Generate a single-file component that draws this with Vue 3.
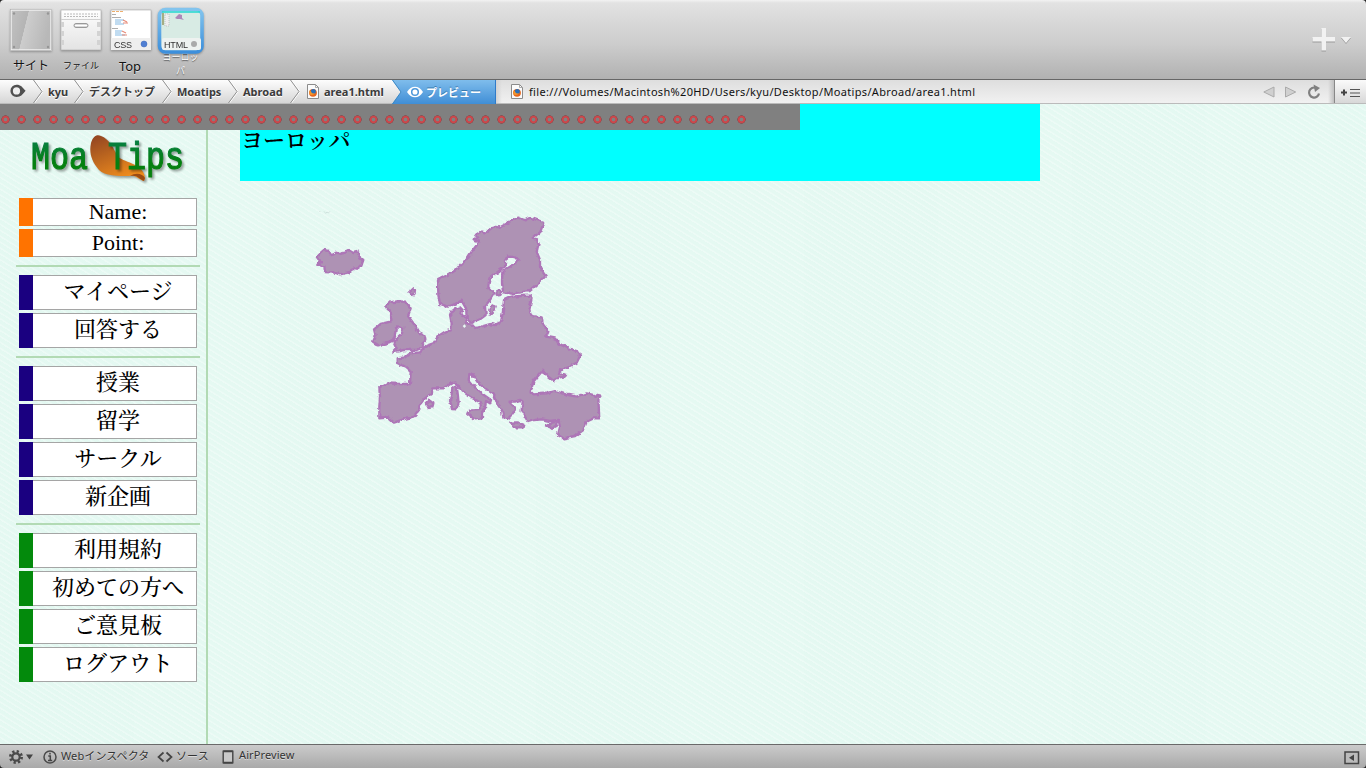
<script setup>
const crumbs = [
  { text: 'kyu', w: 41, cls: '' },
  { text: 'デスクトップ', w: 88, cls: 'jp' },
  { text: 'Moatips', w: 66, cls: '' },
  { text: 'Abroad', w: 62, cls: '' },
  { text: 'area1.html', w: 102, cls: 'doc' },
]
const groups = [
  { kind: 'orange', items: ['Name:', 'Point:'] },
  { kind: 'navy', items: ['マイページ', '回答する'] },
  { kind: 'navy', items: ['授業', '留学', 'サークル', '新企画'] },
  { kind: 'green', items: ['利用規約', '初めての方へ', 'ご意見板', 'ログアウト'] },
]
</script>

<template>
  <div class="window">
    <svg width="0" height="0" class="defs">
      <defs>
        <linearGradient id="metal" x1="0" y1="0" x2="1" y2="0.25">
          <stop offset="0" stop-color="#c2c2c2" /><stop offset=".42" stop-color="#b4b4b4" />
          <stop offset=".43" stop-color="#cdcdcd" /><stop offset="1" stop-color="#b8b8b8" />
        </linearGradient>
        <linearGradient id="drawer" x1="0" y1="0" x2="0" y2="1">
          <stop offset="0" stop-color="#fff" /><stop offset=".4" stop-color="#f3f3f3" /><stop offset="1" stop-color="#e3e3e3" />
        </linearGradient>
        <linearGradient id="sel" x1="0" y1="0" x2="0" y2="1">
          <stop offset="0" stop-color="#82c4ee" /><stop offset="1" stop-color="#3c8fdc" />
        </linearGradient>
        <linearGradient id="leaf" x1="0" y1="0" x2=".5" y2="1">
          <stop offset="0" stop-color="#8f4222" /><stop offset=".4" stop-color="#b4601f" /><stop offset="1" stop-color="#ef8c1e" />
        </linearGradient>
        <linearGradient id="word" x1="0" y1="0" x2="0" y2="1">
          <stop offset="0" stop-color="#087f4c" /><stop offset=".6" stop-color="#04800f" /><stop offset="1" stop-color="#0a8010" />
        </linearGradient>
        <linearGradient id="blue" x1="0" y1="0" x2="0" y2="1">
          <stop offset="0" stop-color="#7fbdec" /><stop offset="1" stop-color="#408ed6" />
        </linearGradient>
        <filter id="rough" x="-2%" y="-2%" width="104%" height="104%">
          <feTurbulence type="fractalNoise" baseFrequency="0.07" numOctaves="2" seed="4" />
          <feDisplacementMap in="SourceGraphic" scale="13" xChannelSelector="R" yChannelSelector="G" />
        </filter>
        <symbol id="fox" viewBox="0 0 12 15">
          <path d="M.5 .5h8l3 3v11H.5z" fill="#fbfbfb" stroke="#8b8b8b" />
          <path d="M8.500 .5v3h3" fill="none" stroke="#999" stroke-width=".8" />
          <circle cx="6" cy="8.800" r="3.900" fill="#e8661b" />
          <circle cx="6.300" cy="7.600" r="2.500" fill="#2b6fb8" />
          <path d="M2.300 6.500c1 .3 2 .8 2.200 2 .8 1 2 1.200 3.300.5-.5 2-4 3-5.300.5z" fill="#f3962b" />
        </symbol>
      </defs>
    </svg>

    <header class="toolbar">
      <div class="tool t1">
        <svg width="50" height="50" viewBox="0 0 50 50">
          <rect x="11" y="10" width="40" height="40" fill="url(#metal)" stroke="#f0f0f0" stroke-width="1.500" />
          <rect x="10.500" y="9.500" width="41" height="41" fill="none" stroke="#a5a5a5" stroke-width=".5" />
          <g fill="#959595"><circle cx="14" cy="13.500" r="1.200" /><circle cx="48" cy="13.500" r="1.200" /><circle cx="14" cy="47" r="1.200" /><circle cx="48" cy="47" r="1.200" /></g>
        </svg>
        <span>サイト</span>
      </div>
      <div class="tool t2">
        <svg width="50" height="50" viewBox="0 0 50 50">
          <rect x="11" y="10" width="40" height="40" fill="url(#drawer)" stroke="#aaa" stroke-width=".6" />
          <path d="M14 14h34M14 16.500h34" stroke="#aaa" stroke-dasharray="2 1" stroke-width=".8" />
          <path d="M11 19.500h40" stroke="#d0d0d0" />
          <path d="M11 22h3v5h-3M11 31h3v5h-3M11 40h3v5h-3M51 22h-4v5h4M51 31h-4v5h4M51 40h-4v5h4" fill="#d3d3d3" />
          <rect x="24" y="23.500" width="14" height="4" rx="2" fill="#d9d9d9" stroke="#999" />
          <path d="M25 25.500h12" stroke="#fff" />
        </svg>
        <span>ファイル</span>
      </div>
      <div class="tool t3">
        <svg width="50" height="50" viewBox="0 0 50 50">
          <rect x="11" y="10" width="40" height="40" fill="#fff" stroke="#aaa" stroke-width=".6" />
          <rect x="11" y="38" width="40" height="12" fill="#eee" />
          <path d="M12 11.500h11" stroke="#eba65e" stroke-width=".9" stroke-dasharray="3 1" />
          <path d="M12 14.500h4M12 17.500h9M12 28.500h6" stroke="#999" stroke-width=".8" />
          <path d="M15 20h9M15 22h6M15 24h9M15 31h7M15 33h6M15 35h10" stroke="#84b9e3" stroke-width="1.200" />
          <path d="M23 20l4 2M23 23h5M22 31l4 2M22 35h5" stroke="#e78a78" stroke-width="1.100" />
          <text x="14" y="48" class="badge" textLength="18">CSS</text>
          <circle cx="44" cy="44" r="3" fill="#4f7fd3" stroke="#3b66b8" stroke-width=".5" />
        </svg>
        <span>Top</span>
      </div>
      <div class="tool t4">
        <svg width="50" height="54" viewBox="0 0 50 54">
          <rect x="9.500" y="9.500" width="42.500" height="42.500" rx="6" fill="#d8ebe4" stroke="url(#sel)" stroke-width="3.600" />
          <path d="M12 12h38" stroke="#23d8d0" stroke-width="1.500" />
          <path d="M13 13v12" stroke="#8b8d50" stroke-width="1.300" /><path d="M15 14h4v12h-4z" fill="#eee" stroke="#aaa" stroke-width=".6" stroke-dasharray="1 1" />
          <path d="M25 18l4-4 3 1 0 3 2 2-4-1-3 0z" fill="#ad87b9" />
          <rect x="12" y="38" width="39" height="12" rx="2" fill="#eef2f0" />
          <text x="14" y="48" class="badge" textLength="24">HTML</text>
          <circle cx="44" cy="44" r="3" fill="#aaa" />
        </svg>
        <span class="light">ヨーロッ<br>パ</span>
      </div>
      <svg class="plus" width="42" height="30" viewBox="0 0 42 30">
        <g fill="#999" transform="translate(0 1)"><path d="M11.500 3h4.500v9h9v4.500h-9v9h-4.500v-9H2.500V12h9zM31 12h10l-5 6z" /></g>
        <path d="M11.500 3h4.500v9h9v4.500h-9v9h-4.500v-9H2.500V12h9zM31 12h10l-5 6z" fill="#f2f2f2" />
      </svg>
    </header>

    <nav class="pathbar">
      <div class="home">
        <svg width="16" height="14" viewBox="0 0 16 14"><path d="M6.500 0.800C11 .8 12 3 15.600 6.800 12 11 11 13 6.500 13A6.100 6.100 0 0 1 6.500.8z" fill="#505050" /><circle cx="6.500" cy="6.900" r="3.600" fill="#eee" /></svg>
      </div>
      <div v-for="c in crumbs" :key="c.text" class="crumb" :class="c.cls" :style="{ width: c.w + 'px' }">
        <svg class="chev" width="10" height="23" viewBox="0 0 10 23"><path d="M1.500 0L10 11.500 1.500 23" fill="none" stroke="#fff" /><path d="M.5 0L9 11.500 .5 23" fill="none" stroke="#8e8e8e" /></svg>
        <svg v-if="c.cls === 'doc'" class="docicon" width="12" height="15"><use href="#fox" /></svg>
        <b>{{ c.text }}</b>
      </div>
      <div class="preview">
        <svg class="shape" width="104" height="24" viewBox="0 0 104 24"><path d="M0 0H104V24H0L9 12z" fill="url(#blue)" /><path d="M.5 0L9 12 .5 24" fill="none" stroke="#3d88c4" /><path d="M103.500 0v24" stroke="#2f7bc9" /></svg>
        <svg class="eye" width="16" height="12" viewBox="0 0 16 12"><path d="M0 6C4-1 12-1 16 6 12 13 4 13 0 6z" fill="#fff" /><circle cx="8" cy="6" r="3.300" fill="none" stroke="#4d98da" stroke-width="1.500" /></svg>
        <b>プレビュー</b>
      </div>
      <div class="address">
        <svg width="12" height="15"><use href="#fox" /></svg>
        <span>file:///Volumes/Macintosh%20HD/Users/kyu/Desktop/Moatips/Abroad/area1.html</span>
        <svg class="navs" width="62" height="16" viewBox="0 0 62 16">
          <path d="M11 3v10L.8 8z" fill="#d0d0d0" stroke="#aaa" /><path d="M22.500 3v10L32.700 8z" fill="#d0d0d0" stroke="#aaa" />
          <path d="M53 3.900A5 5 0 1 0 56 9.500" fill="none" stroke="#808080" stroke-width="2.200" /><path d="M50.500 .5l6.500 3.600-5 4z" fill="#808080" />
        </svg>
      </div>
      <div class="addmark">
        <svg width="20" height="10" viewBox="0 0 20 10"><path d="M0 4.500h6M3 1.500v6" stroke="#444" stroke-width="2" /><path d="M9 1.500h10M9 5h10M9 8.500h10" stroke="#555" stroke-width="1.100" /></svg>
      </div>
    </nav>

    <main class="page">
      <aside class="side">
        <svg class="logo" width="180" height="58" viewBox="20 128 180 58">
          <path d="M91 143C93 136 97 134 101 136 109 139 113 147 118 157 126 163 144 164 145 178L144 181C137 179 137 175 129 176 118 176 105 176 99 170 91 161 89 152 91 143z" fill="url(#leaf)" class="cast" />
          <path d="M130 176C136 172 143 174 145 178L144 181C138 179 139 175 130 176z" fill="#9b4b13" />
          <g class="wordmark" fill="url(#word)" stroke="url(#word)">
            <text x="31" y="169" textLength="57" lengthAdjust="spacingAndGlyphs">Moa</text>
            <text x="108" y="169" textLength="76" lengthAdjust="spacingAndGlyphs">Tips</text>
          </g>
        </svg>
        <template v-for="(g, i) in groups" :key="i">
          <hr v-if="i" class="rule">
          <div class="group" :class="g.kind">
            <div v-for="t in g.items" :key="t" class="item"><i></i><span>{{ t }}</span></div>
          </div>
        </template>
      </aside>
      <section class="content">
        <div class="title">ヨーロッパ</div>
        <svg class="map" width="310" height="250" viewBox="-420 0 930 750">
          <g fill="#ae92b4" stroke="#ad76b7" stroke-width="7" stroke-linejoin="round" filter="url(#rough)">
            <path d="M-370 175L-360 160-348 150-336 153-324 166-312 158-300 162-285 158-270 150-260 156-248 153-242 170-230 180-236 198-250 202-270 216-300 223-320 218-345 216-347 198-365 195-357 183z" />
            <path d="M-6 240L10 232 35 218 48 210 60 195 80 178 95 155 118 125 98 118 115 114 108 104 124 94 138 98 160 80 180 82 205 68 235 53 255 61 270 53 310 66 308 77 300 97 280 112 296 130 290 155 300 180 300 205 317 228 295 250 270 273 240 277 215 281 190 277 186 250 187 215 210 200 235 182 224 171 205 170 195 178 195 200 165 222 148 235 145 262 162 280 150 300 135 318 137 345 120 358 95 368 80 350 78 325 65 302 45 312 25 320 0 312 -5 285z" />
            <path d="M34 390L35 370 30 345 35 332 60 322 68 330 63 345 77 350 82 372 100 375 108 384 150 372 165 375 183 365 188 340 192 300 215 290 240 288 272 287 275 295 268 330 275 348 305 352 308 372 325 395 318 410 345 415 355 430 385 445 415 455 420 468 410 488 385 502 360 512 357 520 378 525 375 530 355 532 340 542 325 530 308 512 292 530 280 545 272 575 280 583 320 580 345 573 385 585 410 590 440 580 482 590 475 600 478 655 460 655 440 665 430 690 405 708 370 715 354 705 360 680 356 660 330 663 305 658 285 660 265 666 258 655 245 632 248 605 241 600 225 605 208 605 222 620 225 632 212 650 205 658 190 650 185 630 172 612 162 584 140 568 115 549 98 525 88 522 86 540 106 564 124 580 153 600 150 610 138 603 135 620 126 636 126 655 104 658 82 640 88 632 118 630 123 618 117 605 90 590 65 572 47 547 35 550 10 565 -20 565 -25 580 -45 595 -62 615 -62 628 -80 650 -110 658 -138 668 -155 653 -182 655 -182 620 -180 590 -182 562 -160 550 -120 552 -90 552 -88 515 -105 500 -130 488 -130 475 -105 472 -90 460 -60 457 -40 437 -20 430 -5 408 15 395z" />
            <path d="M-162 316L-150 308-130 304-102 305-88 325-96 348-76 375-62 400-45 408-44 422-54 432-46 440-70 450-105 450-140 456-130 445-138 427-125 410-114 400-110 384-132 382-136 410-145 425-185 436-201 425-193 408-198 388-178 372-146 364-147 340-157 327z" />
            <path d="M-92 275L-82 265-75 270-76 281-86 285z" />
            <path d="M-42 612L-32 601-20 610-23 621-34 624z" /><path d="M37 563L50 560 53 580 56 610 48 628 36 627 30 600 35 585z" />
            <path d="M211 668L230 667 250 674 248 682 222 682z" /><path d="M318 677L336 668 353 664 348 677 335 684z" />
            <path d="M148 329L157 316 167 319 160 337 153 344z" /><circle cx="176" cy="279" r="7" />
          </g>
          <path d="M-362 33l3 3M-348 34l5 6 4-4 4 3 5-5" fill="none" stroke="#c4d8d3" stroke-width="2" />
          <path d="M68 378l6-5 4 6-5 5z" fill="#e8faf4" />
        </svg>
      </section>
      <div class="beads"><i v-for="n in 47" :key="n"></i></div>
    </main>

    <footer class="status">
      <svg class="gear" width="26" height="16" viewBox="0 0 26 16">
        <circle cx="8" cy="8" r="5.600" fill="none" stroke="#4a4a4a" stroke-width="2.800" stroke-dasharray="2.200 2.198" />
        <circle cx="8" cy="8" r="3.700" fill="none" stroke="#4a4a4a" stroke-width="2.200" />
        <path d="M18 5.500h7l-3.500 5z" fill="#444" />
      </svg>
      <svg class="info" width="14" height="14" viewBox="0 0 14 14"><circle cx="7" cy="7" r="6" fill="none" stroke="#4a4a4a" stroke-width="1.500" /><path d="M7 2.700v1.800M5.300 6h2v4.300M5 10.500h4.200" stroke="#444" stroke-width="1.500" fill="none" /></svg>
      <span class="s1">Webインスペクタ</span>
      <svg class="code" width="16" height="12" viewBox="0 0 16 12"><path d="M6.500 1.500L1.500 6l5 4.500M9.500 1.500l5 4.500-5 4.500" fill="none" stroke="#444" stroke-width="1.700" /></svg>
      <span class="s2">ソース</span>
      <svg class="phone" width="12" height="14" viewBox="0 0 12 14"><path d="M1.200 1h9.600v12H1.200z" fill="#c9c9c9" stroke="#444" stroke-width="1.400" stroke-linejoin="round" /><path d="M2 1.500h8M2 12.500h8" stroke="#444" stroke-width="1.500" /></svg>
      <span class="s3">AirPreview</span>
      <svg class="panel" width="16" height="14" viewBox="0 0 16 14"><rect x="1" y="1" width="13.500" height="11.500" fill="#bbb" stroke="#444" stroke-width="1.500" /><path d="M10 3.500v6.500L5 6.800z" fill="#444" /></svg>
    </footer>
  </div>
</template>

<style>
html, body { margin: 0; overflow: hidden; background: #222; }
</style>
<style scoped>
.window { width: 1366px; height: 768px; display: flex; flex-direction: column; overflow: hidden; font-family: "Noto Sans", "Noto Sans CJK JP", sans-serif; border-radius: 4px; }
.defs { position: absolute; }
.toolbar { box-sizing: border-box; height: 80px; flex: none; display: flex; border-bottom: 1px solid #666; background: linear-gradient(#f2f2f2 0, #e2e2e2 3px, #ccc 45px, #b1b1b1 79px); }
.tool { width: 50px; display: flex; flex-direction: column; align-items: center; position: relative; }
.tool svg { overflow: visible; flex: none; filter: drop-shadow(0 1px 1px rgba(0,0,0,.3)); }
.tool span { margin: 8px 0 0 12px; font-size: 12px; line-height: 16px; white-space: nowrap; color: #111; text-shadow: 0 1px 0 rgba(255,255,255,.5); text-align: center; }
.t2 span { font-size: 9px; }
.t3 span { font-size: 13px; margin-left: 10px; }
.tool .light { margin-top: -4px; margin-left: 11px; font-size: 9px; line-height: 14px; color: #fff; text-shadow: 0 1px 1px #555; }
.badge { font: 9px "Liberation Sans", sans-serif; fill: #333; }
.plus { margin: 25px 14px 0 auto; }
.pathbar { box-sizing: border-box; height: 24px; flex: none; display: flex; background: linear-gradient(#fdfdfd, #d6d6d6); border-bottom: 1px solid #bbb; font-size: 11px; color: #3b3b3b; }
.home { width: 33px; box-sizing: border-box; padding: 4px 0 0 10px; }
.crumb { flex: none; display: flex; align-items: center; position: relative; white-space: nowrap; }
.crumb b { margin-left: 5px; line-height: 22px; text-shadow: 0 1px 0 #fff; }
.docicon { margin-left: 7px; }
.preview { width: 104px; height: 24px; position: relative; display: flex; align-items: center; color: #fff; flex: none; }
.preview .shape { position: absolute; left: 0; top: 0; }
.preview .eye { position: relative; margin-left: 15px; }
.preview b { position: relative; margin-left: 3px; text-shadow: 0 -1px 0 #3679b0; white-space: nowrap; }
.address { flex: 1; display: flex; align-items: center; padding-left: 15px; background: linear-gradient(90deg, #d2d2d2, transparent 6px, transparent calc(100% - 6px), #c0c0c0), linear-gradient(#dedede, #f1f1f1); color: #111; }
.address span { margin-left: 6px; white-space: nowrap; letter-spacing: .338px; }
.navs { margin: 0 9px 0 auto; }
.addmark { width: 32px; box-sizing: border-box; padding: 2px 0 0 6px; border-left: 1px solid #888; display: flex; align-items: center; background: linear-gradient(#fafafa, #d8d8d8); }
.page { height: 640px; flex: none; position: relative; display: flex; overflow: hidden; background:
  repeating-linear-gradient(32deg, rgba(255,255,255,.3) 0 1px, transparent 2px 5px),
  repeating-linear-gradient(90deg, rgba(215,242,234,.08) 0 134px, transparent 134px 268px), #e5f9f2; }
.side { width: 206px; height: 640px; flex: none; border-right: 2px solid #b2dab4; }
.logo { display: block; margin: 24px 0 12px 20px; overflow: visible; }
.cast { filter: drop-shadow(2px 2px 1px rgba(0,0,0,.35)); }
.wordmark { font: 38px "Liberation Mono", monospace; stroke-width: 1.200; filter: drop-shadow(2px 2px 1px rgba(0,0,0,.35)); }
.group { margin-left: 19px; width: 178px; display: flex; flex-direction: column; gap: 3px; }
.item { height: 35px; display: flex; }
.item i { width: 14px; flex: none; background: #1a0080; }
.orange .item i { background: #ff7300; }
.green .item i { background: #038a0c; }
.item span { flex: 1; box-sizing: border-box; border: 1px solid #a5a5a5; border-left: 0; background: #fff; color: #000; padding-left: 7px; text-align: center; font: 500 22px/32px "Liberation Serif", "Noto Serif CJK JP", "Noto Sans CJK JP", serif; white-space: nowrap; }
.orange .item { height: 28px; }
.orange .item span { line-height: 25px; }
.rule { width: 184px; height: 2px; border: 0; background: #b2dab4; margin: 8px 0 8px 16px; }
.content { margin-left: 32px; width: 800px; }
.title { box-sizing: border-box; height: 77px; background: #0ff; padding: 24px 0 0 1px; font: 600 22px/22px "Noto Serif CJK JP", "Noto Sans CJK JP", serif; color: #000; }
.map { display: block; margin: 19px 0 0 60px; }
.beads { position: absolute; left: 0; top: 0; width: 800px; height: 26px; background: #808080; display: flex; align-items: center; gap: 7px; }
.beads i { box-sizing: border-box; width: 9px; height: 9px; margin-top: 5px; flex: none; position: relative; left: .5px; background: radial-gradient(circle, #808080 0 1.500px, #cc474b 2.200px 3.400px, #8a4a4c 3.900px, transparent 4.500px); }
.status { height: 24px; flex: none; box-sizing: border-box; border-top: 1px solid #6a6a6a; display: flex; align-items: center; background: linear-gradient(#cbcbcb, #a9a9a9); font-size: 11px; color: #333; text-shadow: 0 1px 0 rgba(255,255,255,.5); white-space: nowrap; }
.status span { position: relative; top: -2px; letter-spacing: .1px; }
.gear { margin-left: 8px; }
.info { margin-left: 9px; }
.s1 { margin-left: 4px; width: 96px; }
.s2 { margin-left: 3px; width: 46px; }
.s3 { margin-left: 5px; }
.panel { margin: 2px 6px 0 auto; }
</style>
